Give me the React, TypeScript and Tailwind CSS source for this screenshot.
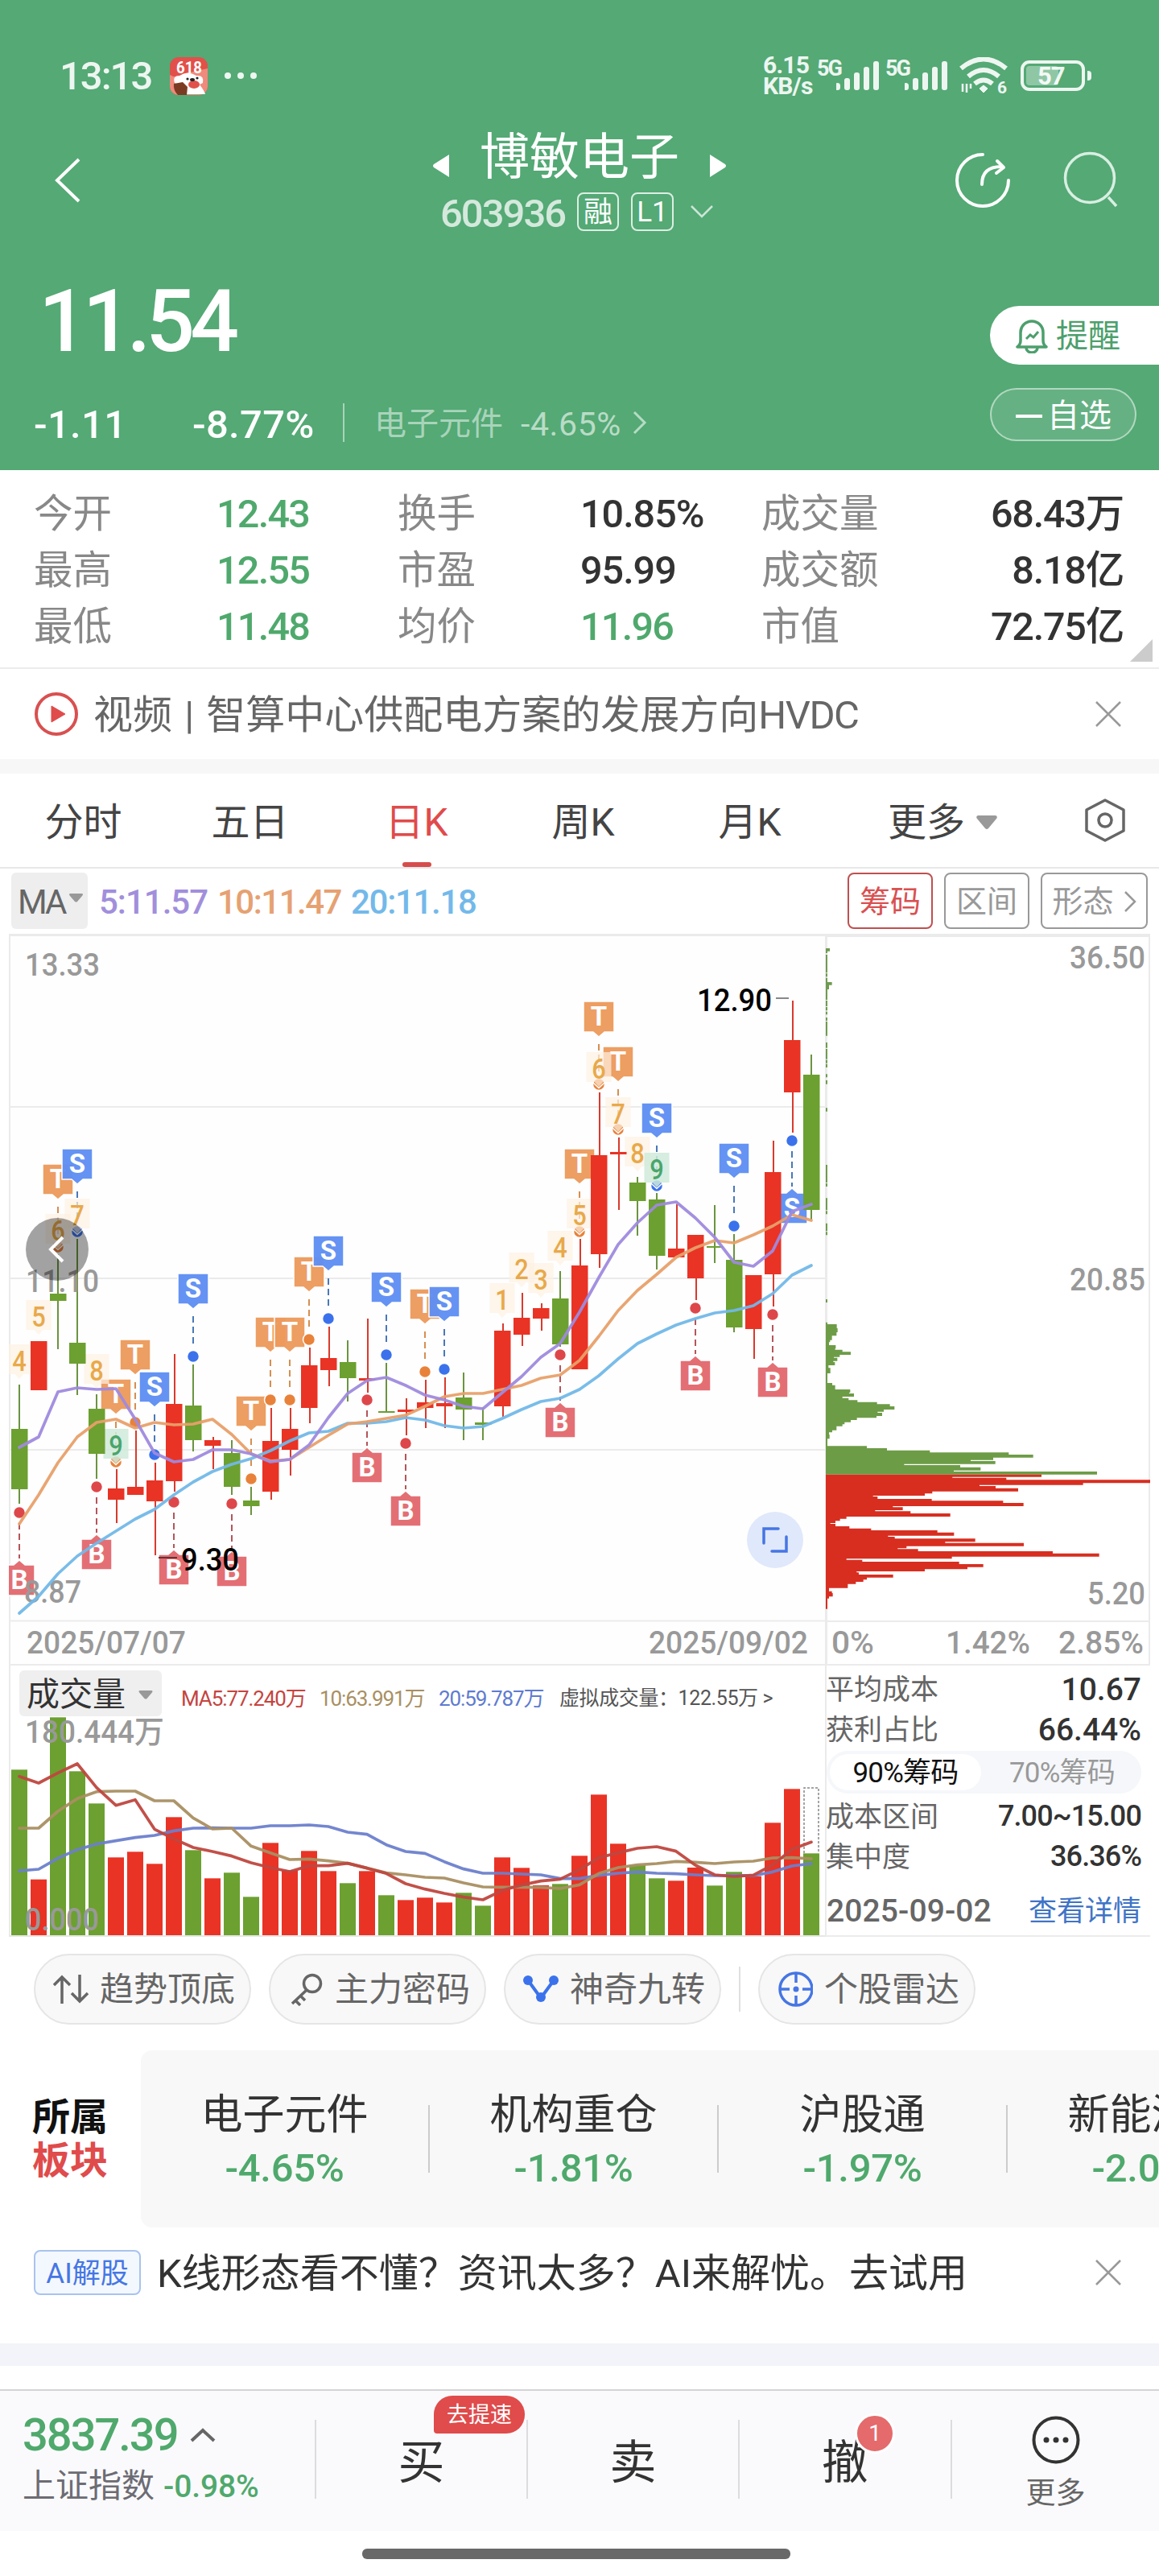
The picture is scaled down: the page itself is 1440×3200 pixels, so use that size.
import { ReactNode } from "react";

// [wick top, wick bottom, body top, body bottom, is up]
type Candle = [number, number, number, number, 0 | 1];

const candles: Candle[] = [
  [1720, 1868, 1775, 1850, 0],
  [1666, 1727, 1666, 1727, 1],
  [1558, 1676, 1607, 1616, 0],
  [1539, 1733, 1668, 1694, 0],
  [1732, 1837, 1750, 1806, 0],
  [1825, 1892, 1849, 1863, 1],
  [1777, 1857, 1847, 1857, 1],
  [1817, 1932, 1839, 1865, 1],
  [1682, 1853, 1744, 1840, 1],
  [1695, 1803, 1746, 1789, 0],
  [1785, 1825, 1789, 1796, 1],
  [1789, 1857, 1805, 1847, 0],
  [1847, 1882, 1864, 1871, 0],
  [1749, 1863, 1790, 1853, 1],
  [1749, 1833, 1775, 1801, 1],
  [1674, 1768, 1696, 1749, 1],
  [1648, 1722, 1687, 1702, 1],
  [1665, 1741, 1692, 1712, 0],
  [1638, 1730, 1712, 1715, 1],
  [1693, 1755, 1753, 1755, 0],
  [1737, 1783, 1751, 1754, 1],
  [1714, 1774, 1742, 1749, 1],
  [1711, 1774, 1743, 1747, 1],
  [1705, 1789, 1736, 1751, 0],
  [1748, 1789, 1767, 1770, 0],
  [1644, 1760, 1653, 1747, 1],
  [1606, 1672, 1637, 1658, 1],
  [1619, 1653, 1625, 1638, 1],
  [1579, 1673, 1613, 1670, 0],
  [1539, 1701, 1572, 1701, 1],
  [1357, 1575, 1435, 1558, 1],
  [1413, 1503, 1431, 1434, 1],
  [1462, 1535, 1469, 1492, 0],
  [1482, 1577, 1490, 1560, 0],
  [1496, 1562, 1551, 1562, 1],
  [1534, 1615, 1534, 1588, 1],
  [1497, 1569, 1548, 1550, 0],
  [1533, 1655, 1565, 1649, 0],
  [1584, 1688, 1584, 1651, 1],
  [1417, 1623, 1456, 1583, 1],
  [1243, 1407, 1292, 1357, 1],
  [1310, 1515, 1335, 1503, 0],
];

const ma5 = [1798, 1785, 1729, 1724, 1726, 1725, 1763, 1805, 1816, 1813, 1801, 1801, 1806, 1816, 1813, 1795, 1761, 1731, 1715, 1711, 1721, 1733, 1739, 1747, 1750, 1730, 1710, 1686, 1669, 1630, 1587, 1546, 1519, 1497, 1493, 1513, 1537, 1568, 1573, 1554, 1505, 1496];
const ma10 = [1893, 1857, 1817, 1785, 1767, 1763, 1774, 1767, 1770, 1769, 1763, 1782, 1806, 1815, 1813, 1798, 1783, 1769, 1766, 1762, 1758, 1747, 1735, 1731, 1731, 1726, 1721, 1712, 1708, 1690, 1660, 1628, 1603, 1583, 1562, 1550, 1541, 1544, 1534, 1523, 1509, 1516];
const ma20 = [2004, 1983, 1955, 1933, 1917, 1902, 1887, 1875, 1857, 1841, 1828, 1819, 1812, 1802, 1790, 1780, 1778, 1768, 1768, 1766, 1761, 1764, 1771, 1774, 1772, 1762, 1751, 1741, 1737, 1726, 1709, 1688, 1669, 1657, 1646, 1638, 1631, 1628, 1622, 1607, 1584, 1572];

// trade marks: letter, candle index, dot position, tag above (1) or below (-1)
const marks: [string, number, number, 1 | -1][] = [
  ["T", 2, 1549, 1],
  ["S", 3, 1530, 1],
  ["T", 6, 1767, 1],
  ["T", 5, 1816, 1],
  ["S", 7, 1807, 1],
  ["S", 9, 1685, 1],
  ["T", 12, 1837, 1],
  ["T", 13, 1739, 1],
  ["T", 14, 1739, 1],
  ["T", 15, 1664, 1],
  ["S", 16, 1638, 1],
  ["S", 19, 1683, 1],
  ["T", 21, 1704, 1],
  ["S", 22, 1701, 1],
  ["T", 29, 1530, 1],
  ["T", 30, 1347, 1],
  ["T", 31, 1403, 1],
  ["S", 33, 1473, 1],
  ["S", 37, 1523, 1],
  ["S", 40, 1417, -1],
  ["B", 0, 1879, -1],
  ["B", 4, 1847, -1],
  ["B", 8, 1866, -1],
  ["B", 11, 1868, -1],
  ["B", 18, 1739, -1],
  ["B", 20, 1793, -1],
  ["B", 28, 1683, -1],
  ["B", 35, 1625, -1],
  ["B", 39, 1633, -1],
];

const turns: [number, number, number][] = [
  [4, 0, 1670],
  [5, 1, 1615],
  [6, 2, 1508],
  [7, 3, 1489],
  [8, 4, 1682],
  [9, 5, 1775],
  [1, 25, 1594],
  [2, 26, 1556],
  [3, 27, 1569],
  [4, 28, 1529],
  [5, 29, 1489],
  [6, 30, 1307],
  [7, 31, 1363],
  [8, 32, 1412],
  [9, 33, 1432],
];

// chip distribution, in thirds of a pixel: [top, bottom, right edge]
const sparseChips: [number, number, number][] = [
  [324, 335, 93], [335, 342, 84], [348, 415, 84], [418, 430, 84], [434, 450, 84], [450, 461, 101], [461, 477, 90], [477, 516, 84],
  [519, 540, 84], [543, 556, 84], [560, 571, 84], [582, 594, 84], [597, 650, 84], [675, 695, 84], [699, 737, 84], [740, 752, 84],
  [755, 768, 84], [793, 805, 84], [816, 830, 84], [919, 932, 84], [1131, 1197, 84], [1200, 1212, 84], [1255, 1300, 84],
  [1303, 1315, 84], [1349, 1378, 84], [1381, 1393, 84], [1632, 1644, 84],
];
const greenChips: [number, number, number][] = [
  [248, 255, 84], [255, 270, 119], [270, 285, 122], [285, 298, 118], [298, 314, 101], [314, 322, 94], [322, 333, 90],
  [333, 345, 115], [345, 350, 113], [350, 358, 140], [358, 369, 171], [369, 377, 130], [377, 380, 108], [380, 392, 121],
  [392, 396, 106], [396, 408, 112], [408, 418, 88], [418, 438, 95], [438, 474, 84], [474, 482, 102], [482, 498, 113],
  [498, 510, 169], [510, 513, 165], [513, 525, 183], [525, 530, 140], [530, 538, 163], [538, 545, 196], [545, 553, 269],
  [553, 561, 317], [561, 573, 334], [573, 581, 294], [581, 585, 271], [585, 597, 288], [597, 604, 267], [604, 612, 194],
  [612, 620, 171], [620, 628, 148], [628, 635, 140], [635, 650, 118], [650, 658, 102], [658, 666, 90], [666, 682, 92],
  [682, 709, 84], [709, 717, 231], [717, 725, 306], [725, 733, 466], [733, 741, 760], [741, 752, 851], [752, 761, 702],
  [761, 765, 618], [765, 776, 710], [776, 780, 370], [780, 788, 579], [788, 800, 655], [800, 804, 555], [804, 815, 1089],
];
const redChips: [number, number, number][] = [
  [815, 824, 882], [824, 827, 550], [827, 835, 751], [835, 847, 1287], [847, 854, 1037], [854, 858, 651], [858, 866, 711],
  [866, 878, 795], [878, 886, 475], [886, 894, 447], [894, 897, 254], [897, 906, 271], [906, 913, 473], [913, 921, 739],
  [921, 933, 815], [933, 937, 328], [937, 948, 365], [948, 952, 262], [952, 960, 394], [960, 972, 542], [972, 980, 155],
  [980, 988, 131], [988, 996, 114], [996, 999, 95], [999, 1008, 114], [1008, 1016, 166], [1016, 1023, 247], [1023, 1031, 494],
  [1031, 1043, 556], [1043, 1047, 310], [1047, 1054, 335], [1054, 1066, 635], [1066, 1070, 523], [1070, 1082, 816],
  [1082, 1090, 379], [1090, 1093, 346], [1093, 1101, 422], [1101, 1109, 924], [1109, 1121, 1097], [1121, 1129, 548],
  [1129, 1133, 155], [1133, 1140, 214], [1140, 1149, 575], [1149, 1160, 665], [1160, 1168, 606], [1168, 1176, 447],
  [1176, 1180, 193], [1180, 1188, 201], [1188, 1199, 329], [1199, 1207, 231], [1207, 1215, 218], [1215, 1223, 190],
  [1223, 1238, 160], [1238, 1250, 90], [1250, 1257, 101], [1257, 1270, 104], [1270, 1277, 90], [1277, 1316, 84],
];

const volumes = [475, 884, 280, 481, 601, 802, 781, 826, 652, 775, 880, 859, 949, 748, 850, 778, 853, 898, 853, 943, 961, 952, 970, 934, 982, 802, 841, 906, 901, 796, 568, 751, 831, 880, 889, 840, 907, 856, 872, 673, 547, 787];
const vol5 = [500, 525, 487, 453, 542, 608, 587, 697, 733, 765, 780, 797, 822, 840, 855, 833, 833, 824, 842, 862, 900, 920, 936, 950, 960, 925, 905, 890, 883, 848, 803, 785, 768, 762, 779, 831, 867, 873, 868, 830, 772, 745];
const vol10 = [693, 693, 630, 583, 557, 555, 555, 591, 591, 655, 696, 693, 760, 785, 810, 808, 815, 824, 842, 860, 867, 876, 879, 897, 912, 913, 913, 914, 918, 904, 862, 840, 830, 825, 817, 820, 825, 819, 816, 804, 803, 807];
const vol20 = [852, 846, 805, 773, 752, 740, 728, 720, 703, 693, 692, 693, 693, 684, 684, 681, 687, 708, 716, 755, 780, 787, 818, 845, 861, 861, 864, 867, 881, 881, 869, 861, 856, 861, 863, 867, 870, 869, 870, 856, 834, 825];

const RED = "#e93325";
const GREEN = "#6ca030";
const markColors: Record<string, [string, string]> = {
  T: ["#ec9a5c", "#e8823a"],
  S: ["#5f8ff2", "#3b72ec"],
  B: ["#e2696e", "#de474a"],
};

const cx = (i: number) => 24 + i * 24;
const line = (ys: number[]) => ys.map((y, i) => `${cx(i)},${y}`).join(" ");
const volY = (v: number) => 2040 + v / 3;

function Label({ x, y, w, children, fill = "#999", size = 39 }: { x: number; y: number; w: number; children: string; fill?: string; size?: number }) {
  return (
    <text x={x} y={y} textLength={w} lengthAdjust="spacingAndGlyphs" fontSize={size} fill={fill} fontWeight={500}>
      {children}
    </text>
  );
}

function Mark({ letter, x, dot, dir }: { letter: string; x: number; dot: number; dir: 1 | -1 }) {
  const [fill, dotFill] = markColors[letter];
  const top = dir === 1 ? dot - 103 : dot + 65;
  const d =
    dir === 1
      ? `M${x - 19} ${top}h38v38h-12l-7 6l-7 -6h-12z`
      : `M${x - 19} ${top}h12l7 -6l7 6h12v38h-38z`;
  return (
    <g>
      <line
        x1={x}
        x2={x}
        y1={dir === 1 ? top + 53 : dot + 13}
        y2={dir === 1 ? dot - 12 : top - 8}
        stroke={letter === "B" ? "#b5555a" : letter === "T" ? "#d68f52" : "#4a78b8"}
        strokeWidth={2}
        strokeDasharray="8 5"
      />
      <circle cx={x} cy={dot} r={7.5} fill={dotFill} stroke="#fff" strokeWidth={1.5} />
      <path d={d} fill={fill} fillOpacity={0.96} stroke="#fff" strokeWidth={1.5} strokeLinejoin="round" />
      <text x={x} y={top + 30} textAnchor="middle" fontSize={33} fontWeight={700} fill="#fff">
        {letter}
      </text>
    </g>
  );
}

function PriceChart() {
  return (
    <svg width={1025} height={909} viewBox="0 1160 1025 909" className="block">
      <defs>
        <clipPath id="plot">
          <rect x={11} y={1160} width={1014} height={909} />
        </clipPath>
      </defs>
      <rect x={12} y={1161} width={1013} height={908} fill="#fefefe" />
      <g stroke="#ebebeb" strokeWidth={2}>
        <line x1={11} x2={1025} y1={1161.5} y2={1161.5} strokeWidth={3} />
        <line x1={12} x2={12} y1={1160} y2={2069} />
        <line x1={11} x2={1025} y1={1375} y2={1375} />
        <line x1={11} x2={1025} y1={1588} y2={1588} />
        <line x1={11} x2={1025} y1={1801} y2={1801} />
        <line x1={11} x2={1025} y1={2013.5} y2={2013.5} />
        <line x1={11} x2={1025} y1={2068} y2={2068} />
      </g>
      <g clipPath="url(#plot)">
        {marks.map(([letter, i, dot, dir]) => (
          <Mark key={`${letter}${i}`} letter={letter} x={cx(i)} dot={dot} dir={dir} />
        ))}
        {turns.map(([n, i, top]) => (
          <g key={i}>
            <path
              d={`M${cx(i) - 15.5} ${top}h31v37h-10l-5.5 6l-5.5 -6h-10z`}
              fill={n === 9 ? "#cfeadb" : "#fdf1e3"}
              fillOpacity={n === 9 ? 0.85 : 0.7}
            />
            {[2, 3, 5, 29, 30, 31, 33].includes(i) && (
              <path d={`M${cx(i) - 7} ${top + 38}l7 6.5l7 -6.5`} fill="none" stroke="#fff" strokeWidth={1.5} />
            )}
            <text
              x={cx(i)}
              y={top + 33}
              textAnchor="middle"
              fontSize={35}
              fontWeight={500}
              fill={n === 9 ? "#4aa56b" : "#e8a94a"}
              transform={`translate(${cx(i) * 0.12} 0) scale(0.88 1)`}
            >
              {n}
            </text>
          </g>
        ))}
        {candles.map(([top, bottom, open, close, up], i) => (
          <g key={i} fill={up ? RED : GREEN}>
            <rect x={cx(i) - (up ? 0 : 1)} y={top} width={2} height={bottom - top} fill={up ? "#d93a2d" : "#6b9440"} />
            <rect x={cx(i) - 10} y={open} width={20.5} height={close - open} />
          </g>
        ))}
        <Label x={32} y={1605} w={91}>11.10</Label>
        <Label x={30} y={1991} w={71}>8.87</Label>
        <g fill="none" strokeWidth={3.7} strokeLinecap="round" strokeLinejoin="round" strokeOpacity={0.95}>
          <polyline points={line(ma20)} stroke="#72b8e8" />
          <polyline points={line(ma10)} stroke="#e8a06a" />
          <polyline points={line(ma5)} stroke="#9f8ade" />
        </g>
      </g>
      <Label x={31} y={1212} w={93}>13.33</Label>
      <line x1={197} x2={220} y1={1935} y2={1935} stroke="#633" strokeWidth={2} />
      <Label x={225} y={1951} w={72} fill="#000">9.30</Label>
      <Label x={866} y={1256} w={93} fill="#000">12.90</Label>
      <line x1={964} x2={980} y1={1240} y2={1240} stroke="#888" strokeWidth={2} />
      <Label x={33} y={2054} w={198}>2025/07/07</Label>
      <Label x={806} y={2054} w={198}>2025/09/02</Label>

      <circle cx={71} cy={1552} r={39} fill="#000" fillOpacity={0.36} />
      <path d="M78 1537L63 1552L78 1567" fill="none" stroke="#fff" strokeWidth={4} />

      <circle cx={963} cy={1913} r={35} fill="#e0e8fb" />
      <path d="M967 1899H949V1917M977 1909V1927H959" fill="none" stroke="#4676e4" strokeWidth={3.5} strokeLinecap="round" />
    </svg>
  );
}

function chipPath(rows: [number, number, number][]) {
  return rows.map(([a, b, r]) => `M78 ${a}H${r}V${b}H78z`).join("");
}

function ChipChart() {
  return (
    <svg width={415} height={909} viewBox="1025 1160 415 909" className="block">
      <g stroke="#ebebeb" strokeWidth={2}>
        <line x1={1025} x2={1429} y1={1162} y2={1162} strokeWidth={4} />
        <line x1={1026} x2={1026} y1={1160} y2={2069} strokeWidth={4} />
        <line x1={1428} x2={1428} y1={1160} y2={2069} />
        <line x1={1025} x2={1429} y1={2014} y2={2014} />
        <line x1={1025} x2={1429} y1={2068} y2={2068} />
      </g>
      <path d={chipPath(sparseChips)} fill="#6f9b50" transform="translate(1000 1070) scale(0.33333)" />
      <path d={chipPath(greenChips)} fill="#6d9c47" transform="translate(1000 1560) scale(0.33333)" />
      <path d={chipPath(redChips)} fill="#d72e20" transform="translate(1000 1560) scale(0.33333)" />
      <Label x={1329} y={1203} w={94}>36.50</Label>
      <Label x={1329} y={1603} w={94}>20.85</Label>
      <Label x={1351} y={1993} w={72}>5.20</Label>
      <Label x={1033} y={2054} w={53}>0%</Label>
      <Label x={1175} y={2054} w={105}>1.42%</Label>
      <Label x={1315} y={2054} w={106}>2.85%</Label>
    </svg>
  );
}

function VolumeChart() {
  return (
    <svg width={1025} height={273} viewBox="0 2133 1025 273" className="block">
      <line x1={12} x2={12} y1={2133} y2={2405} stroke="#ebebeb" strokeWidth={2} />
      <line x1={11} x2={1025} y1={2405} y2={2405} stroke="#e6e6e6" strokeWidth={2} />
      {volumes.map((v, i) => (
        <rect key={i} x={cx(i) - 10} y={volY(v)} width={20} height={2404 - volY(v)} fill={candles[i][4] ? RED : GREEN} />
      ))}
      <path d="M999 2302V2221H1017V2302" fill="none" stroke="#888" strokeWidth={1.5} strokeDasharray="3 2" />
      <Label x={31} y={2165} w={173}>180.444万</Label>
      <Label x={31} y={2398} w={92}>0.000</Label>
      <g fill="none" strokeWidth={3.7} strokeLinecap="round" strokeLinejoin="round" strokeOpacity={0.95}>
        <polyline points={line(vol20.map(volY))} stroke="#6c80cc" />
        <polyline points={line(vol10.map(volY))} stroke="#a98f62" />
        <polyline points={line(vol5.map(volY))} stroke="#bf473f" />
      </g>
    </svg>
  );
}

function Signal() {
  return (
    <div className="flex h-[46px] w-[85px] items-start">
      <span className="w-[24px] pt-px text-[27px] leading-none font-bold tracking-[-2px]">5G</span>
      <svg width={56} height={46} viewBox="0 0 56 46" fill="currentColor">
        <rect x={-2} y={32} width={7} height={9} rx={3.5} />
        <rect x={10} y={26} width={7} height={15} rx={3} />
        <rect x={22} y={19} width={7} height={22} rx={3} />
        <rect x={34} y={12} width={7} height={29} rx={3} />
        <rect x={46} y={5} width={7} height={36} rx={3} />
      </svg>
    </div>
  );
}

function StatusBar() {
  return (
    <div className="flex h-[60px] items-center pr-[84px] pl-[74px] text-white/90">
      <span className="w-[137px] text-[49px] leading-none font-medium tracking-[-2px]">13:13</span>
      <svg width={47} height={47} viewBox="0 0 47 47">
        <rect width={47} height={47} rx={11} fill="#e2504a" />
        <path d="M0 22q10 6 20 -2l27 -6v22a11 11 0 0 1 -11 11h-25a11 11 0 0 1 -11 -11z" fill="#f08a7c" />
        <text x={8} y={20} fontSize={21} fontWeight={700} fill="#fff" textLength={32} lengthAdjust="spacingAndGlyphs">618</text>
        <path d="M6 32q-3 -9 6 -9q10 -7 21 0q10 -1 8 9l-4 2q6 8 7 12h-32q-6 -5 -4 -13z" fill="#fff" />
        <path d="M5 33l11 -2l6 6l-1 10h-11q-6 -6 -5 -14z" fill="#7b3b22" />
        <ellipse cx={30} cy={34} rx={7} ry={5} fill="#e2504a" />
        <circle cx={22} cy={27} r={1.6} fill="#222" />
        <circle cx={34} cy={26} r={1.6} fill="#222" />
        <ellipse cx={28} cy={28} rx={3} ry={2} fill="#222" />
      </svg>
      <svg width={42} height={10} viewBox="0 0 42 10" className="ml-[20px]" fill="currentColor">
        <circle cx={5} cy={5} r={4} />
        <circle cx={21} cy={5} r={4} />
        <circle cx={37} cy={5} r={4} />
      </svg>
      <div className="ml-auto flex items-center">
        <div className="w-[67px] text-[30px] leading-[26px] font-bold tracking-[-0.8px]">
          <div>6.15</div>
          <div>KB/s</div>
        </div>
        <Signal />
        <Signal />
        <svg width={60} height={46} viewBox="0 0 60 46" className="ml-[7px]" fill="none" stroke="currentColor" strokeWidth={6}>
          <path d="M2 14q28 -23 56 0" />
          <path d="M11 24q19 -16 38 0" />
          <path d="M19 33q11 -9 22 0" />
          <path d="M30 35l5 4l-5 5l-5 -5z" fill="currentColor" strokeWidth={1} />
          <path d="M4 33v10M9 44v-11M14 33v6" strokeWidth={2.5} />
          <text x={47} y={45} fontSize={21} fontWeight={700} fill="currentColor" stroke="none">6</text>
        </svg>
        <div className="ml-[16px] flex h-[38px] w-[80px] items-center rounded-[11px] border-4 border-current p-[3px]">
          <div className="h-full w-[40px] rounded-[4px] bg-white/35"></div>
          <span className="-ml-[26px] text-[31px] leading-none font-bold tracking-[-1px]">57</span>
        </div>
        <div className="ml-[3px] h-[12px] w-[5px] rounded-r bg-current"></div>
      </div>
    </div>
  );
}

function Header() {
  return (
    <header className="h-[584px] bg-[#54a975] pt-16 text-white">
      <StatusBar />
      <div className="mt-6 grid h-[152px] grid-cols-[300px_1fr_300px]">
        <div className="flex items-center pl-[66px]">
          <svg width={36} height={58} viewBox="0 0 36 58" fill="none" stroke="currentColor" strokeWidth={4}>
            <path d="M32 3L5 29L32 55" />
          </svg>
        </div>
        <div className="flex flex-col items-center pt-[12px]">
          <div className="flex h-[66px] items-center text-[62px] leading-none">
            <svg width={20} height={30} viewBox="0 0 20 30" fill="currentColor" className="mt-[25px]">
              <path d="M20 1v28L1 17q-2 -2 0 -4z" />
            </svg>
            <span className="mx-[38px] pt-[6px]">博敏电子</span>
            <svg width={20} height={30} viewBox="0 0 20 30" fill="currentColor" className="mt-[25px]">
              <path d="M0 1v28L19 17q2 -2 0 -4z" />
            </svg>
          </div>
          <div className="mt-[13px] -ml-[6px] flex h-[48px] items-center">
            <span className="w-[170px] pt-[4px] text-[49px] leading-none font-medium tracking-[-2px] text-white/75">603936</span>
            <span className="flex h-[48px] w-[52px] items-center justify-center rounded-lg border-2 border-white/80 pt-px text-[36px] leading-none">融</span>
            <span className="ml-[15px] flex h-[48px] w-[53px] items-center justify-center rounded-lg border-2 border-white/80 text-[35px] leading-none">L1</span>
            <svg width={30} height={18} viewBox="0 0 30 18" className="ml-[20px]" fill="none" stroke="#cbe6d5" strokeWidth={2.5}>
              <path d="M2 2L15 15L28 2" />
            </svg>
          </div>
        </div>
        <div className="flex items-center justify-end pr-[50px]">
          <svg width={70} height={72} viewBox="0 0 70 72" fill="none" stroke="currentColor" strokeWidth={4}>
            <path d="M35 4A32 32 0 1 0 67 36" strokeLinecap="round" />
            <path d="M34 41q0 -22 24 -22" strokeLinecap="round" />
            <path d="M53 12l8 8l-9 7" strokeLinecap="round" strokeLinejoin="round" />
          </svg>
          <svg width={72} height={72} viewBox="0 0 72 72" className="ml-[62px]" fill="none" stroke="#d9efe2" strokeWidth={3.5}>
            <circle cx={36} cy={33} r={30.5} />
            <path d="M59 57l10 11" />
          </svg>
        </div>
      </div>
      <div className="flex justify-between">
        <div className="pt-[47px] pl-[42px]">
          <div className="pl-[6px] text-[107px] leading-[106px] font-medium tracking-[-6px]">11.54</div>
          <div className="mt-[50px] flex h-[48px] items-center text-[49px] leading-none">
            <span className="w-[197px] font-medium tracking-[0.3px]">-1.11</span>
            <span className="w-[187px] font-medium tracking-[0.3px]">-8.77%</span>
            <span className="mb-[4px] h-full w-[2px] bg-white/50"></span>
            <span className="ml-[37px] text-[40px] text-white/50">电子元件</span>
            <span className="ml-[22px] text-[41px] tracking-[0.6px] text-white/60">-4.65%</span>
            <svg width={18} height={30} viewBox="0 0 18 30" className="mb-[4px] ml-[14px]" fill="none" stroke="#b5dcc5" strokeWidth={3}>
              <path d="M2 2L15 15L2 28" />
            </svg>
          </div>
        </div>
        <div className="w-[210px] pt-[80px]">
          <div className="flex h-[73px] items-center rounded-l-full bg-white pt-[2px] pl-[32px] text-[40px] leading-none text-[#4d9f6d]">
            <svg width={40} height={42} viewBox="0 0 40 42" fill="none" stroke="currentColor" strokeWidth={3.5}>
              <path d="M2 34H38Q34 31 34 26V16A14 14 0 0 0 6 16V26Q6 31 2 34Z" strokeLinejoin="round" />
              <path d="M13 35a7 6 0 0 0 14 0" />
              <path d="M13 24l5 -5l4 3l6 -7" strokeWidth={3} />
            </svg>
            <span className="ml-[10px]">提醒</span>
          </div>
          <div className="mt-[29px] flex h-[66px] w-[182px] items-center rounded-full border-2 border-white/50 bg-white/10 pt-[3px] pl-[30px] text-[40px] leading-none">
            <span className="mr-[6px] h-[4px] w-[33px] bg-white"></span>
            自选
          </div>
        </div>
      </div>
    </header>
  );
}

const stats = [
  ["今开", "12.43", "换手", "10.85%", "成交量", "68.43万"],
  ["最高", "12.55", "市盈", "95.99", "成交额", "8.18亿"],
  ["最低", "11.48", "均价", "11.96", "市值", "72.75亿"],
];

function Stats() {
  return (
    <section className="relative h-[247px] border-b-2 border-[#ececec] pt-[20px] text-[48.5px] leading-none text-[#333]">
      {stats.map((row) => (
        <div key={row[0]} className="grid h-[70px] grid-cols-[229px_223px_229px_223px_auto_1fr] items-center pr-[44px] pl-[42px]">
          <span className="text-[#888]">{row[0]}</span>
          <span className="-ml-[2px] font-medium tracking-[-1.7px] text-[#4fa96c]">{row[1]}</span>
          <span className="text-[#888]">{row[2]}</span>
          <span className={row[2] === "均价" ? "-ml-[2px] font-medium tracking-[-1.7px] text-[#4fa96c]" : "-ml-[2px] font-medium tracking-[-1px]"}>{row[3]}</span>
          <span className="text-[#888]">{row[4]}</span>
          <span className="text-right font-medium tracking-[-1.2px]">{row[5]}</span>
        </div>
      ))}
      <svg width={28} height={28} viewBox="0 0 28 28" className="absolute right-[8px] bottom-[7px]" fill="#ccc">
        <path d="M28 0V28H0z" />
      </svg>
    </section>
  );
}

function Close() {
  return (
    <svg width={34} height={34} viewBox="0 0 34 34" className="ml-auto" fill="none" stroke="#999" strokeWidth={2.5}>
      <path d="M2 2L32 32M32 2L2 32" />
    </svg>
  );
}

const tabs = ["分时", "五日", "日K", "周K", "月K"];

function Tabs() {
  return (
    <nav className="flex h-[118px] items-center border-b-2 border-[#e8e8e8] pr-[41px] text-[48px] leading-none text-[#444]">
      {tabs.map((t) => (
        <div key={t} className={`relative flex h-full w-[207px] items-center justify-center pt-[5px] ${t === "日K" ? "text-[#e04b4b]" : ""}`}>
          {t}
          {t === "日K" && <span className="absolute bottom-0 h-[6px] w-[36px] rounded-full bg-[#d64d4d]"></span>}
        </div>
      ))}
      <span className="ml-[68px] pt-[5px]">更多</span>
      <svg width={26} height={17} viewBox="0 0 26 17" className="mt-[4px] ml-[14px]" fill="#999">
        <path d="M2 0h22q3 1 1 4l-10 12q-2 2 -4 0L1 4q-2 -3 1 -4z" />
      </svg>
      <svg width={52} height={56} viewBox="0 0 52 56" className="ml-auto" fill="none" stroke="#666" strokeWidth={3.5}>
        <path d="M26 3L49 15V41L26 53L3 41V15Z" strokeLinejoin="round" />
        <circle cx={26} cy={28} r={8} />
      </svg>
    </nav>
  );
}

function Box({ children, className }: { children: ReactNode; className: string }) {
  return <span className={`flex h-[70px] items-center justify-center rounded-lg border-2 pt-[2px] ${className}`}>{children}</span>;
}

function IndicatorRow() {
  return (
    <div className="flex h-[81px] items-start pt-[5px] pr-[14px] pl-[14px] text-[42px] leading-none">
      <span className="flex h-[70px] w-[95px] items-center rounded-md bg-[#eee] pt-[3px] pl-[8px] tracking-[-3px] text-[#666]">
        MA
        <svg width={17} height={11} viewBox="0 0 17 11" className="-mt-[10px] ml-[6px]" fill="#999">
          <path d="M1 0h15q2 1 0 3l-6 7q-1 1 -3 0L1 3q-2 -2 0 -3z" />
        </svg>
      </span>
      <div className="flex h-[70px] items-center pt-[4px] pl-[14px] font-medium">
        <span className="w-[147px] tracking-[-1px] text-[#a18fdc]">5:11.57</span>
        <span className="w-[166px] tracking-[-1.5px] text-[#e6a172]">10:11.47</span>
        <span className="tracking-[-1.3px] text-[#73b9ea]">20:11.18</span>
      </div>
      <div className="ml-auto flex gap-[14px] text-[38px] text-[#999]">
        <Box className="w-[106px] border-[#bf5050] text-[#d95050]">筹码</Box>
        <Box className="w-[106px] border-[#999]">区间</Box>
        <Box className="w-[133px] border-[#999]">
          形态
          <svg width={16} height={28} viewBox="0 0 16 28" className="ml-[12px]" fill="none" stroke="#999" strokeWidth={2.5}>
            <path d="M2 2L14 14L2 26" />
          </svg>
        </Box>
      </div>
    </div>
  );
}

function VolumeHeader() {
  return (
    <div className="flex h-[64px] pl-[11px]">
      <div className="flex flex-1 items-start border-l-2 border-[#ebebeb] pt-[6px] pl-[11px] text-[26px] leading-none">
        <span className="flex h-[57px] w-[177px] shrink-0 items-center rounded-md bg-[#efefef] pt-[3px] pl-[9px] text-[41px] text-[#333]">
          成交量
          <svg width={18} height={11} viewBox="0 0 17 11" className="ml-[16px]" fill="#999">
            <path d="M1 0h15q2 1 0 3l-6 7q-1 1 -3 0L1 3q-2 -2 0 -3z" />
          </svg>
        </span>
        <div className="flex h-[57px] items-center pt-[12px] pl-[24px] tracking-[-1.1px] whitespace-nowrap">
          <span className="w-[172px] text-[#c5443f]">MA5:77.240万</span>
          <span className="w-[148px] text-[#a98f62]">10:63.991万</span>
          <span className="w-[150px] text-[#5e7bd0]">20:59.787万</span>
          <span className="text-[25px] tracking-[-0.4px] text-[#555]">虚拟成交量：122.55万 &gt;</span>
        </div>
      </div>
    </div>
  );
}

function CostRow({ label, value, small }: { label: string; value: string; small?: boolean }) {
  return (
    <div className="flex h-[50px] items-center justify-between text-[35px] leading-none text-[#666]">
      <span className="-ml-px pt-[2px]">{label}</span>
      <span className={small ? "text-[36px] font-medium tracking-[-0.9px] text-[#333]" : "pt-[3px] text-[39px] font-medium text-[#333]"}>{value}</span>
    </div>
  );
}

function CostPanel() {
  return (
    <div className="flex h-[337px] w-[404px] flex-col border-b-2 border-l-2 border-[#ebebeb] pt-[4px] pr-[11px]">
      <CostRow label="平均成本" value="10.67" />
      <CostRow label="获利占比" value="66.44%" />
      <div className="mt-[2px] flex h-[53px] shrink-0 items-center rounded-full bg-[#f5f7fa] px-[4px] text-[35px] leading-none tracking-[-0.8px]">
        <span className="flex h-[45px] w-[188px] items-center justify-center rounded-full bg-white pt-[2px] text-[#111]">90%筹码</span>
        <span className="flex-1 pt-[2px] pl-[6px] text-center text-[#999]">70%筹码</span>
      </div>
      <div className="mt-[3px]">
        <CostRow label="成本区间" value="7.00~15.00" small />
        <CostRow label="集中度" value="36.36%" small />
      </div>
      <div className="mt-[24px] flex items-center justify-between text-[35px] leading-none">
        <span className="text-[39px] font-medium tracking-[0.1px] text-[#666]">2025-09-02</span>
        <span className="text-[#3f74c6]">查看详情</span>
      </div>
    </div>
  );
}

const pill = "flex h-[88px] w-[270px] items-center rounded-full border-2 border-[#e5e5e5] bg-[#f8f8f8] pl-[20px] text-[42px] leading-none text-[#666]";

function Tools() {
  return (
    <div className="mt-[21px] flex items-center gap-[22px] pl-[42px]">
      <div className={pill}>
        <svg width={48} height={40} viewBox="0 0 48 40" className="mr-[12px]" fill="none" stroke="#666" strokeWidth={3.5}>
          <path d="M13 38V5M3 15L13 5L23 15M35 2V35M25 25L35 35L45 25" />
        </svg>
        <span className="pt-[2px]">趋势顶底</span>
      </div>
      <div className={pill}>
        <svg width={46} height={42} viewBox="0 0 46 42" className="mr-[14px]" fill="none" stroke="#666" strokeWidth={3.5}>
          <circle cx={32} cy={14} r={10.5} />
          <path d="M25 22L7 39M11 35l6 6M17 29l6 6" />
        </svg>
        <span className="pt-[2px]">主力密码</span>
      </div>
      <div className={pill}>
        <svg width={46} height={40} viewBox="0 0 46 40" className="mr-[14px]" fill="#3b72ec">
          <path d="M8 9L24 31L40 9" fill="none" stroke="#3b72ec" strokeWidth={4} />
          <circle cx={8} cy={9} r={6} />
          <circle cx={40} cy={9} r={6} />
          <circle cx={24} cy={30} r={6} />
        </svg>
        <span className="pt-[2px]">神奇九转</span>
      </div>
      <span className="h-[56px] w-[2px] bg-[#e0e0e0]"></span>
      <div className={pill}>
        <svg width={46} height={46} viewBox="0 0 46 46" className="mr-[14px]" fill="none" stroke="#4676e4" strokeWidth={3.5}>
          <circle cx={25} cy={23} r={20} />
          <path d="M25 4v11M25 31v11M6 23h11M33 23h11" />
          <circle cx={25} cy={23} r={3.5} fill="#4676e4" stroke="none" />
        </svg>
        <span className="pt-[2px]">个股雷达</span>
      </div>
    </div>
  );
}

const sectors = [
  ["电子元件", "-4.65%"],
  ["机构重仓", "-1.81%"],
  ["沪股通", "-1.97%"],
  ["新能源车", "-2.05%"],
];

function Sectors() {
  return (
    <div className="mt-[32px] flex h-[220px]">
      <div className="w-[175px] shrink-0 pt-[56px] pl-[40px] text-[47px] leading-[54px] font-bold">
        <div className="text-[#111]">所属</div>
        <div className="text-[#e04b4b]">板块</div>
      </div>
      <div className="flex flex-1 items-center overflow-hidden rounded-l-[14px] bg-[#f8f8f8]">
        {sectors.map(([name, change]) => (
          <div key={name} className="flex h-[84px] w-[359px] shrink-0 flex-col items-center justify-center border-r-2 border-[#ccc] pt-[8px]">
            <div className="text-[52px] leading-[66px] text-[#333]">{name}</div>
            <div className="text-[49px] leading-[66px] font-medium tracking-[-0.3px] text-[#4fa96c]">{change}</div>
          </div>
        ))}
      </div>
    </div>
  );
}

function BottomBar() {
  return (
    <div className="mt-[29px] flex h-[176px] items-center border-t-2 border-[#d4d4d6] bg-[#fafafc] pb-1 text-[#333]">
      <div className="h-[98px] w-[391px] pl-[28px]">
        <div className="-mt-[9px] flex items-center text-[56px] leading-none font-medium tracking-[-2px] text-[#4fa96c]">
          3837.39
          <svg width={32} height={18} viewBox="0 0 32 18" className="ml-[15px]" fill="none" stroke="#666" strokeWidth={4}>
            <path d="M2 16L16 3L30 16" />
          </svg>
        </div>
        <div className="mt-[15px] flex items-center text-[41px] leading-none text-[#6c6c74]">
          上证指数
          <span className="ml-[11px] pt-[2px] text-[39px] font-medium tracking-[-0.1px] text-[#4fa96c]">-0.98%</span>
        </div>
      </div>
      <div className="relative flex h-[98px] w-[263px] items-center justify-center border-l-2 border-[#dcdcdf] pt-[7px] text-[58px] leading-none">
        买
        <span className="absolute -top-[30px] left-[146px] rounded-[23px] rounded-bl-[4px] bg-[#e04b4b] px-[16px] pt-[11px] pb-[9px] text-[27px] text-white">去提速</span>
      </div>
      <div className="flex h-[98px] w-[263px] items-center justify-center border-l-2 border-[#dcdcdf] pt-[7px] text-[58px] leading-none">卖</div>
      <div className="relative flex h-[98px] w-[264px] items-center justify-center border-l-2 border-[#dcdcdf] pt-[7px] text-[58px] leading-none">
        撤
        <span className="absolute -top-[8px] left-[143px] flex size-[50px] items-center justify-center rounded-full border-3 border-white bg-[#e46a6c] text-[28px] text-white">1</span>
      </div>
      <div className="flex h-[98px] flex-1 flex-col items-center justify-center border-l-2 border-[#dcdcdf] pt-[6px] text-[37px] leading-none">
        <svg width={62} height={62} viewBox="0 0 62 62" className="shrink-0" fill="none" stroke="#333" strokeWidth={4}>
          <circle cx={31} cy={31} r={27.5} />
          <g fill="#333" stroke="none">
            <circle cx={19} cy={31} r={3.5} />
            <circle cx={31} cy={31} r={3.5} />
            <circle cx={43} cy={31} r={3.5} />
          </g>
        </svg>
        <span className="mt-[17px] text-[#666]">更多</span>
      </div>
    </div>
  );
}

export default function App() {
  return (
    <div className="h-[3200px] w-[1440px] overflow-hidden bg-white font-['Roboto','Noto_Sans_CJK_SC',sans-serif]">
      <Header />
      <Stats />
      <div className="flex h-[112px] items-center pr-[46px] pl-[42px] text-[49px] leading-none text-[#666]">
        <svg width={56} height={56} viewBox="0 0 56 56" className="mr-[18px]">
          <circle cx={28} cy={28} r={25} fill="none" stroke="#d95050" strokeWidth={4} />
          <path d="M22 18v20L39 28z" fill="#e04b4b" stroke="#e04b4b" strokeLinejoin="round" />
        </svg>
        <span className="pt-[3px] [word-spacing:3px]">视频 | 智算中心供配电方案的发展方向<span className="tracking-[-1.5px]">HVDC</span></span>
        <Close />
      </div>
      <div className="h-[18px] bg-[#f7f7f7]"></div>
      <Tabs />
      <IndicatorRow />
      <div className="flex">
        <div>
          <PriceChart />
          <VolumeHeader />
          <VolumeChart />
        </div>
        <div>
          <ChipChart />
          <CostPanel />
        </div>
      </div>
      <Tools />
      <Sectors />
      <div className="flex h-[144px] items-start pt-[28px] pr-[46px] pl-[42px]">
        <span className="mr-[20px] flex h-[56px] w-[133px] items-center justify-center rounded-lg border-2 border-[#a9c3ee] bg-[#f3f8fe] pt-[2px] text-[35px] leading-none text-[#4676e4]">AI解股</span>
        <div className="flex h-[56px] flex-1 items-center text-[49px] leading-none text-[#333]">
          <span className="pt-[3px]">K线形态看不懂？资讯太多？AI来解忧。去试用</span>
          <Close />
        </div>
      </div>
      <div className="h-[28px] bg-[#f3f4f9]"></div>
      <BottomBar />
      <div className="mt-[22px] ml-[450px] h-[13px] w-[532px] rounded-[6px] bg-[#696969]"></div>
    </div>
  );
}
